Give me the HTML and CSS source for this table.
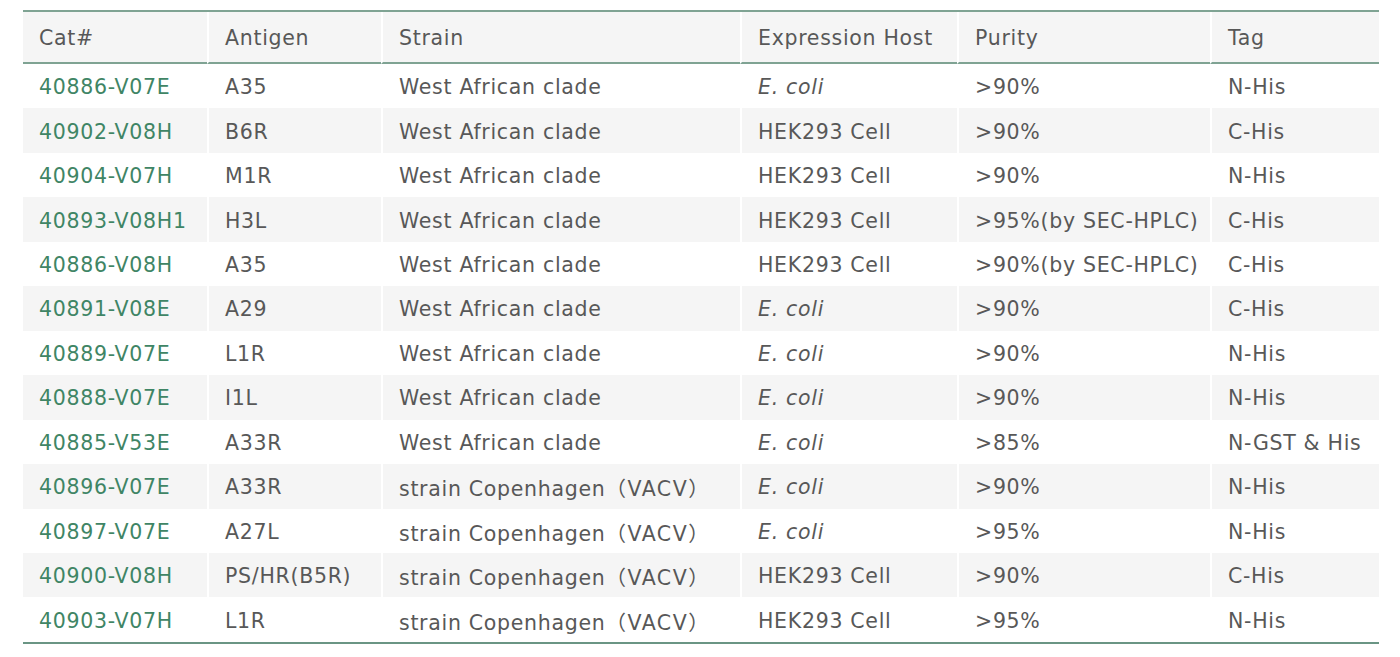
FILE: index.html
```html
<!DOCTYPE html>
<html lang="en">
<head>
<meta charset="utf-8">
<title>Products</title>
<link rel="stylesheet" href="styles.css">
</head>
<body>
<table class="products">
  <colgroup>
    <col class="c-cat"><col class="c-ag"><col class="c-strain"><col class="c-host"><col class="c-purity"><col class="c-tag">
  </colgroup>
  <thead>
    <tr><th>Cat#</th><th>Antigen</th><th>Strain</th><th>Expression Host</th><th>Purity</th><th>Tag</th></tr>
  </thead>
  <tbody>
    <tr><td class="cat">40886-V07E</td><td>A35</td><td>West African clade</td><td><i>E. coli</i></td><td>&gt;90%</td><td>N-His</td></tr>
    <tr><td class="cat">40902-V08H</td><td>B6R</td><td>West African clade</td><td>HEK293 Cell</td><td>&gt;90%</td><td>C-His</td></tr>
    <tr><td class="cat">40904-V07H</td><td>M1R</td><td>West African clade</td><td>HEK293 Cell</td><td>&gt;90%</td><td>N-His</td></tr>
    <tr><td class="cat">40893-V08H1</td><td>H3L</td><td>West African clade</td><td>HEK293 Cell</td><td>&gt;95%(by SEC-HPLC)</td><td>C-His</td></tr>
    <tr><td class="cat">40886-V08H</td><td>A35</td><td>West African clade</td><td>HEK293 Cell</td><td>&gt;90%(by SEC-HPLC)</td><td>C-His</td></tr>
    <tr><td class="cat">40891-V08E</td><td>A29</td><td>West African clade</td><td><i>E. coli</i></td><td>&gt;90%</td><td>C-His</td></tr>
    <tr><td class="cat">40889-V07E</td><td>L1R</td><td>West African clade</td><td><i>E. coli</i></td><td>&gt;90%</td><td>N-His</td></tr>
    <tr><td class="cat">40888-V07E</td><td>I1L</td><td>West African clade</td><td><i>E. coli</i></td><td>&gt;90%</td><td>N-His</td></tr>
    <tr><td class="cat">40885-V53E</td><td>A33R</td><td>West African clade</td><td><i>E. coli</i></td><td>&gt;85%</td><td>N-GST &amp; His</td></tr>
    <tr><td class="cat">40896-V07E</td><td>A33R</td><td>strain Copenhagen<span class="fw">（VACV）</span></td><td><i>E. coli</i></td><td>&gt;90%</td><td>N-His</td></tr>
    <tr><td class="cat">40897-V07E</td><td>A27L</td><td>strain Copenhagen<span class="fw">（VACV）</span></td><td><i>E. coli</i></td><td>&gt;95%</td><td>N-His</td></tr>
    <tr><td class="cat">40900-V08H</td><td>PS/HR(B5R)</td><td>strain Copenhagen<span class="fw">（VACV）</span></td><td>HEK293 Cell</td><td>&gt;90%</td><td>C-His</td></tr>
    <tr><td class="cat">40903-V07H</td><td>L1R</td><td>strain Copenhagen<span class="fw">（VACV）</span></td><td>HEK293 Cell</td><td>&gt;95%</td><td>N-His</td></tr>
  </tbody>
</table>
</body>
</html>
```
FILE: styles.css
```css
html, body {
  margin: 0;
  background: #ffffff;
}
body {
  padding: 10px 21px 0 23px;
  font-family: "DejaVu Sans", "Noto Sans CJK SC", sans-serif;
  color: #585858;
}
.products {
  width: 1356px;
  border-collapse: separate;
  border-spacing: 0;
  table-layout: fixed;
  font-size: 20.5px;
  letter-spacing: 0.7px;
  border-top: 2px solid #7fa393;
  border-bottom: 2px solid #6a9584;
}
.c-cat { width: 184px; }
.c-ag { width: 174px; }
.c-strain { width: 359px; }
.c-host { width: 217px; }
.c-purity { width: 253px; }
.c-tag { width: 169px; }
.products th,
.products td {
  text-align: left;
  font-weight: 400;
  padding: 2px 0 0 16px;
  white-space: nowrap;
  border-left: 2px solid #ffffff;
}
.products th:first-child,
.products td:first-child {
  border-left: 0;
}
.products thead th {
  height: 48px;
  background: #f5f5f5;
  border-bottom: 2px solid #7fa393;
}
.products tbody td {
  height: 42.46px;
}
.products tbody tr:nth-child(even) td {
  background: #f5f5f5;
}
.products td.cat {
  color: #3f8565;
}
.products i {
  font-style: italic;
}
.products .fw {
  letter-spacing: 1.5px;
}
```
